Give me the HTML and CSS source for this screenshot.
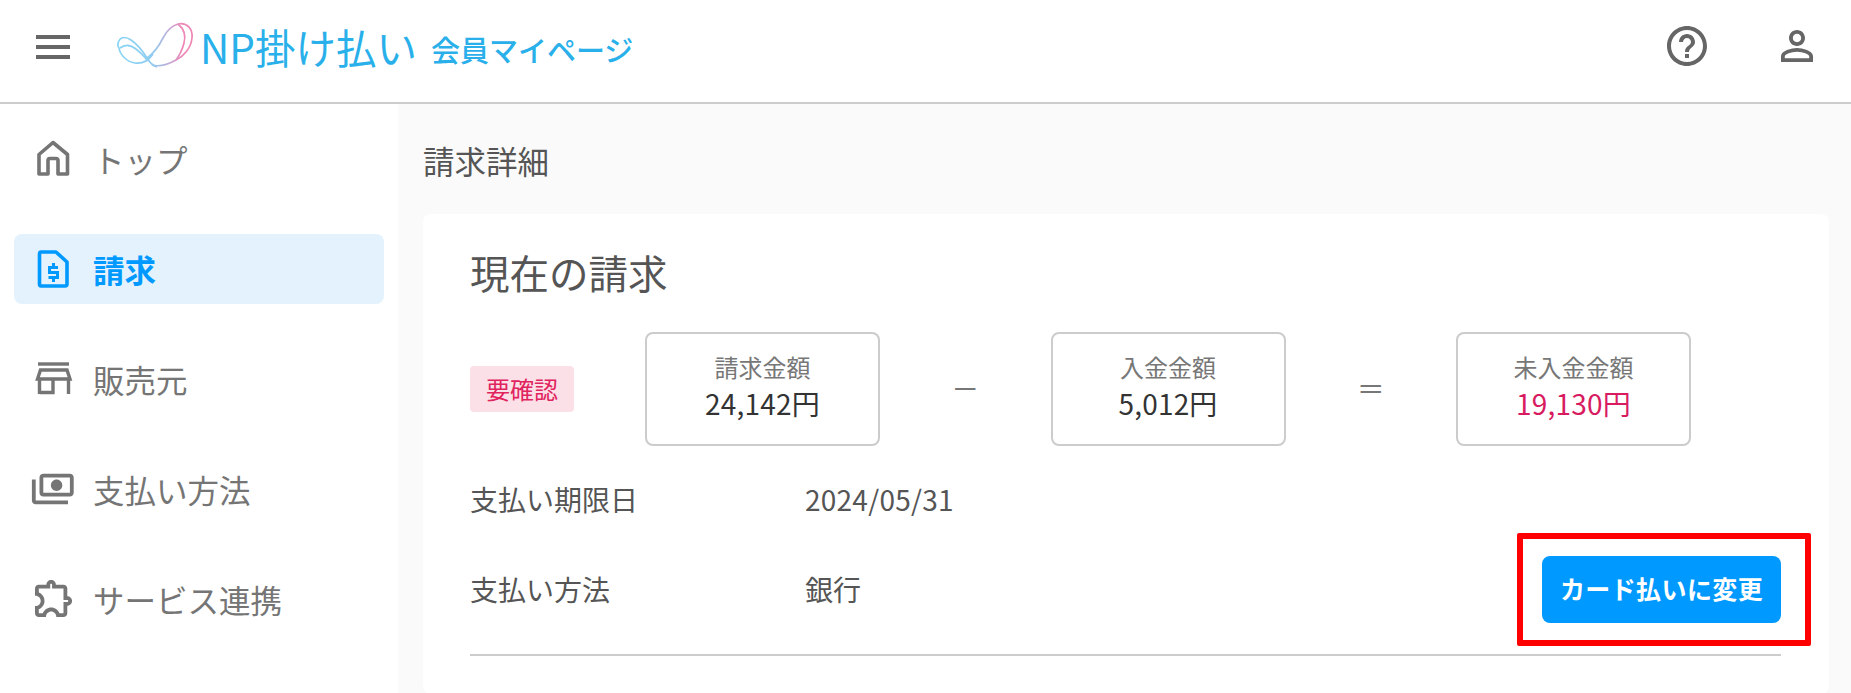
FILE: index.html
```html
<!DOCTYPE html>
<html lang="ja">
<head>
    <meta charset="UTF-8">
    <meta name="viewport" content="width=device-width, initial-scale=1.0">
    <title>請求詳細 - NP掛け払い 会員マイページ</title>
    <link rel="stylesheet" href="styles.css">
</head>
<body>
    <!-- Header -->
    <header class="topbar">
        <div class="menu-btn">
            <span></span>
            <span></span>
            <span></span>
        </div>
        <div class="logo">
            <svg class="logo-mark" viewBox="0 0 76 48" fill="none" stroke="url(#logoGrad)" stroke-width="1.7">
                <defs>
                    <linearGradient id="logoGrad" gradientUnits="userSpaceOnUse" x1="0" y1="0" x2="76" y2="0">
                        <stop offset="0" stop-color="#86d4f4"/>
                        <stop offset="0.45" stop-color="#8fcdf0"/>
                        <stop offset="0.65" stop-color="#b9b3dc"/>
                        <stop offset="0.85" stop-color="#ee86b6"/>
                        <stop offset="1" stop-color="#ee86b6"/>
                    </linearGradient>
                </defs>
                <path d="M61 1C70 -1 76 6 75 15C74 25 67 33 59 37C50 42 42 44 35 42"/>
                <path d="M61 1C67 6 69 13 67 20C65 28 62 33 59 37"/>
                <path d="M61 1C54 3 49 9 46 15C42 23 37 30 30 35"/>
                <path d="M2 18C4 13 10 14 14 17C20 21 25 27 30 35C33 40 36 43 40 44"/>
                <path d="M2 18C0 21 1 24 2 25C3 32 10 39 18 40C26 41 32 37 36 31"/>
                <path d="M3 25C8 21 14 22 19 26C23 29 27 33 31 38"/>
            </svg>
            <span class="logo-name">NP掛け払い</span>
            <span class="logo-sub">会員マイページ</span>
        </div>
        <div class="topbar-icons">
            <svg class="top-icon" viewBox="0 0 24 24"><path d="M11 18h2v-2h-2v2zm1-16C6.48 2 2 6.48 2 12s4.48 10 10 10 10-4.48 10-10S17.52 2 12 2zm0 18c-4.41 0-8-3.59-8-8s3.59-8 8-8 8 3.59 8 8-3.59 8-8 8zm0-14c-2.21 0-4 1.79-4 4h2c0-1.1.9-2 2-2s2 .9 2 2c0 2-3 1.75-3 5h2c0-2.25 3-2.5 3-5 0-2.21-1.79-4-4-4z"/></svg>
            <svg class="top-icon" viewBox="0 0 24 24"><path d="M12 5.9c1.16 0 2.1.94 2.1 2.1s-.94 2.1-2.1 2.1S9.9 9.16 9.9 8s.94-2.1 2.1-2.1m0 9c2.97 0 6.1 1.46 6.1 2.1v1.1H5.9V17c0-.64 3.13-2.1 6.1-2.1M12 4C9.79 4 8 5.79 8 8s1.79 4 4 4 4-1.79 4-4-1.79-4-4-4zm0 9c-2.67 0-8 1.34-8 4v3h16v-3c0-2.66-5.33-4-8-4z"/></svg>
        </div>
    </header>

    <div class="layout">
        <!-- Sidebar -->
        <nav class="sidebar">
            <a class="nav-item" href="#">
                <svg class="nav-icon line" viewBox="0 0 44 44" stroke-width="3.6" stroke-linejoin="round">
                    <path d="M9 17.5L23 5.5L37.5 17.5V37H28V23.5Q28 21.5 26 21.5H20Q18 21.5 18 23.5V37H9Z"/>
                </svg>
                <span>トップ</span>
            </a>
            <a class="nav-item active" href="#">
                <svg class="nav-icon line" viewBox="0 0 44 44" stroke-width="3.6" stroke-linejoin="round">
                    <path d="M11 5H26L37 15V37Q37 39 35 39H11Q9.5 39 9.5 37V7Q9.5 5 11 5Z"/>
                    <path d="M28 20.5H19.5V25.5H27.5V30.5H18.5M23.5 16V20M23.5 31V35" stroke-width="3" stroke-linejoin="miter"/>
                </svg>
                <span>請求</span>
            </a>
            <a class="nav-item" href="#">
                <svg class="nav-icon line" viewBox="0 0 44 44" stroke-width="3.4">
                    <path d="M8 7H39"/>
                    <path d="M10.5 13H37L40 22H7.5Z"/>
                    <path d="M9.5 22V37M38.5 22V37M9.5 35.5H23V22"/>
                </svg>
                <span>販売元</span>
            </a>
            <a class="nav-item" href="#">
                <svg class="nav-icon" viewBox="0 0.42 23.16 23.16">
                    <path transform="matrix(-1 0 0 1 24 0)" d="M19 14V6c0-1.1-.9-2-2-2H3c-1.1 0-2 .9-2 2v8c0 1.1.9 2 2 2h14c1.1 0 2-.9 2-2zm-2 0H3V6h14v8zm-7-7c-1.66 0-3 1.34-3 3s1.34 3 3 3 3-1.34 3-3-1.34-3-3-3zm13 0v11c0 1.1-.9 2-2 2H4v-2h17V7h2z"/>
                </svg>
                <span>支払い方法</span>
            </a>
            <a class="nav-item" href="#">
                <svg class="nav-icon" viewBox="-0.63 0.9 23.16 23.16">
                    <path d="M10.5 4.5c.28 0 .5.22.5.5v2h6v6h2c.28 0 .5.22.5.5s-.22.5-.5.5h-2v6h-2.12c-.68-1.75-2.39-3-4.38-3s-3.7 1.25-4.38 3H4v-2.12c1.75-.68 3-2.39 3-4.38 0-1.99-1.24-3.7-2.99-4.38L4 7h6V5c0-.28.22-.5.5-.5m0-2C9.12 2.5 8 3.62 8 5H4c-1.1 0-1.99.9-1.99 2v3.8h.29c1.49 0 2.7 1.21 2.7 2.7s-1.21 2.7-2.7 2.7H2V20c0 1.1.9 2 2 2h3.8v-.3c0-1.49 1.21-2.7 2.7-2.7s2.7 1.21 2.7 2.7v.3H17c1.1 0 2-.9 2-2v-4c1.38 0 2.5-1.12 2.5-2.5S20.38 11 19 11V7c0-1.1-.9-2-2-2h-4c0-1.38-1.12-2.5-2.5-2.5z"/>
                </svg>
                <span>サービス連携</span>
            </a>
        </nav>

        <!-- Main content -->
        <main class="content">
            <h1 class="page-title">請求詳細</h1>
            <section class="card">
                <h2 class="card-title">現在の請求</h2>

                <div class="summary">
                    <span class="badge">要確認</span>
                    <div class="amount-box">
                        <span class="amount-label">請求金額</span>
                        <span class="amount-value">24,142円</span>
                    </div>
                    <span class="operator">－</span>
                    <div class="amount-box">
                        <span class="amount-label">入金金額</span>
                        <span class="amount-value">5,012円</span>
                    </div>
                    <span class="operator">＝</span>
                    <div class="amount-box">
                        <span class="amount-label">未入金金額</span>
                        <span class="amount-value unpaid">19,130円</span>
                    </div>
                </div>

                <div class="info-row due-row">
                    <span class="info-label">支払い期限日</span>
                    <span class="due-date">2024/05/31</span>
                </div>
                <div class="info-row method-row">
                    <span class="info-label">支払い方法</span>
                    <span>銀行</span>
                    <div class="change-wrap">
                        <a class="change-btn" href="#">カード払いに変更</a>
                        <div class="highlight"></div>
                    </div>
                </div>
                <hr class="divider">
            </section>
        </main>
    </div>
</body>
</html>
```

FILE: styles.css
```css
html, body {
    height: 100%;
}

body {
    margin: 0;
    overflow: hidden;
    background-color: #fff;
    color: #555;
    font-family: "Noto Sans CJK JP", "Noto Sans", sans-serif;
    font-size: 28px;
    line-height: 1.4;
}

/* Header */
.topbar {
    display: flex;
    align-items: center;
    height: 102px;
    border-bottom: 2px solid #ccc;
    box-sizing: content-box;
}

.menu-btn {
    display: flex;
    flex-direction: column;
    gap: 6px;
    width: 34px;
    margin: -8px 0 0 36px;
}

.menu-btn span {
    height: 4px;
    background-color: #666;
}

.logo {
    display: flex;
    align-items: center;
    margin: -8px 0 0 47px;
    color: #29b0ea;
}

.logo-mark {
    width: 76px;
    height: 48px;
    margin-right: 7px;
    overflow: visible;
}

.logo-name {
    font-size: 40.5px;
    font-weight: 400;
    line-height: 1;
}

.logo-sub {
    margin: 4px 0 0 14px;
    font-size: 29px;
    font-weight: 500;
    line-height: 1;
}

.topbar-icons {
    display: flex;
    gap: 62px;
    margin: -10px 30px 0 auto;
}

.top-icon {
    width: 48px;
    height: 48px;
    fill: #666;
}

/* Layout */
.layout {
    display: flex;
    height: 589px;
}

.sidebar {
    display: flex;
    flex-direction: column;
    gap: 40px;
    width: 370px;
    padding: 20px 14px;
    flex-shrink: 0;
}

.nav-item {
    display: flex;
    align-items: center;
    gap: 19px;
    height: 70px;
    padding-left: 16px;
    border-radius: 8px;
    color: #757575;
    font-size: 31.5px;
    text-decoration: none;
    flex-shrink: 0;
}

.nav-item.active {
    background-color: #e3f2fd;
    color: #0099ff;
    font-weight: bold;
}

.nav-icon {
    width: 44px;
    height: 44px;
    fill: currentColor;
    flex-shrink: 0;
}

.nav-icon.line {
    fill: none;
    stroke: currentColor;
}

/* Content */
.content {
    flex: 1;
    padding: 0 22px 0 25px;
    background-color: #fafafa;
}

.page-title {
    height: 110px;
    margin: 0;
    font-size: 31.5px;
    font-weight: normal;
    line-height: 112px;
}

.card {
    height: 480px;
    padding: 0 48px 0 47px;
    border-radius: 8px;
    background-color: #fff;
}

.card-title {
    height: 118px;
    margin: 0;
    font-size: 39.5px;
    font-weight: normal;
    line-height: 116px;
}

.summary {
    display: flex;
    align-items: center;
}

.badge {
    width: 104px;
    height: 46px;
    margin-right: 71px;
    border-radius: 4px;
    background-color: #fce0e8;
    color: #e0245e;
    font-size: 24px;
    line-height: 46px;
    text-align: center;
}

.amount-box {
    display: flex;
    flex-direction: column;
    align-items: center;
    justify-content: center;
    box-sizing: border-box;
    width: 235px;
    height: 114px;
    padding-bottom: 8px;
    border: 2px solid #ccc;
    border-radius: 8px;
}

.amount-label {
    color: #777;
    font-size: 24px;
    line-height: 37px;
}

.amount-value {
    color: #333;
    font-size: 28px;
    letter-spacing: 0.2px;
    line-height: 37px;
}

.amount-value.unpaid {
    color: #d81b60;
}

.operator {
    width: 170.5px;
    color: #777;
    font-size: 28px;
    text-align: center;
}

.info-row {
    display: flex;
    align-items: center;
    font-size: 28px;
}

.info-label {
    width: 335px;
}

.due-row {
    height: 40px;
    margin-top: 34px;
}

.due-date {
    letter-spacing: 0.25px;
}

.method-row {
    height: 67px;
    margin-top: 36px;
}

.change-wrap {
    position: relative;
    margin-left: auto;
}

.change-btn {
    display: block;
    width: 239px;
    height: 67px;
    border-radius: 8px;
    background-color: #0099ff;
    color: #fff;
    font-size: 25px;
    font-weight: bold;
    letter-spacing: 0.4px;
    line-height: 65px;
    text-align: center;
    text-decoration: none;
}

/* red annotation frame */
.highlight {
    position: absolute;
    top: -23px;
    right: -30px;
    bottom: -23px;
    left: -25px;
    border: 6px solid #f00;
    border-radius: 2px;
}

.divider {
    height: 2px;
    margin: 31px 0 0;
    border: 0;
    background-color: #ccc;
}
```
